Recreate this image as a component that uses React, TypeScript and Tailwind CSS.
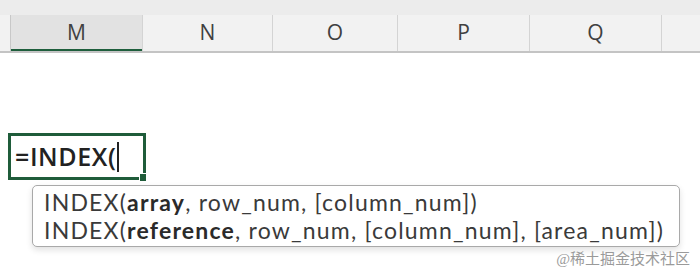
export default function App() {
  const cols = [
    { label: "M", w: 133, active: true },
    { label: "N", w: 130 },
    { label: "O", w: 125 },
    { label: "P", w: 132 },
    { label: "Q", w: 132 },
  ];

  return (
    <div className="relative w-[700px] h-[271px] overflow-hidden bg-white font-['Open_Sans','Noto_Sans',sans-serif] text-[#333]">
      {/* top strip */}
      <div className="h-[15px] bg-[#ececec]" />

      {/* column headers */}
      <div className="flex h-[38px] bg-[#f2f2f2] border-b-2 border-[#c4c4c4]">
        <div className="w-[10px] shrink-0" />
        {cols.map((c) => (
          <div
            key={c.label}
            style={{ width: c.w }}
            className={`shrink-0 flex items-center justify-center text-[21px] text-[#404040] border-r border-[#d4d4d4] ${
              c.active ? "bg-[#e2e2e2] border-l border-l-[#c8c8c8] shadow-[inset_0_-2px_0_#1e5e3c]" : ""
            }`}
          >
            {c.label}
          </div>
        ))}
        <div className="flex-1" />
      </div>

      {/* sheet body */}
      <div className="pt-[80px] pl-[8px]">
        <div className="relative w-[138px] h-[47px] border-[3px] border-[#1f5c3a] flex items-center pl-[4px]">
          <span className="text-[25px] font-semibold text-[#222] leading-none tracking-[0.6px]">=INDEX(</span>
          <span className="ml-[1px] w-[2px] h-[30px] bg-[#222]" />
          <div className="absolute -right-[4px] -bottom-[5px] w-[8px] h-[9px] bg-[#1f5c3a] border border-white" />
        </div>

        <div className="relative ml-[24px] mt-[5px] w-[648px] rounded-[5px] border border-[#a9a9a9] bg-white shadow-[0_3px_6px_rgba(0,0,0,0.12)] pl-[11px] pt-[2px] pb-[2px] font-['Lato','Open_Sans',sans-serif] text-[23px] leading-[28px] text-[#3a3a3a] tracking-[1.2px]">
          <div>
            INDEX(<b className="font-bold text-[#2a2a2a]">array</b>, row_num, [column_num])
          </div>
          <div>
            INDEX(<b className="font-bold text-[#2a2a2a]">reference</b>, row_num, [column_num], [area_num])
          </div>
        </div>
      </div>

      <div className="absolute right-[10px] top-[248px] text-[15px] text-[#9a9a9a] font-['Liberation_Serif','Noto_Sans_CJK_SC',serif]">
        @稀土掘金技术社区
      </div>
    </div>
  );
}
